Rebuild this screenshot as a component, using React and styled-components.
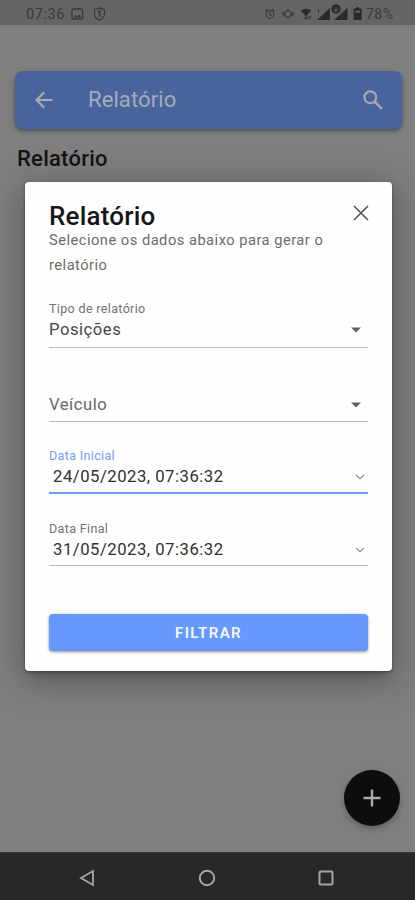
import * as React from 'react';
import styled, { createGlobalStyle } from 'styled-components';

const GlobalStyle = createGlobalStyle`
    * {
        box-sizing: border-box;
    }

    body {
        margin: 0;
        font-family: Roboto, "Liberation Sans", sans-serif;
    }
`;

const StatusIcons = () => (
    <StatusSvg width="100" height="20" viewBox="0 0 100 20">
        {/* alarm */}
        <g fill="none" stroke="#393939" strokeWidth="1.2">
            <circle cx="6" cy="10.5" r="3.8" />
            <path d="M1.3 7.2L3.8 5M10.7 7.2L8.2 5M6 8v2.7l1.8 1" />
        </g>
        {/* vibrate */}
        <path d="M24 6l4.2 4-4.2 4-4.2-4z" fill="none" stroke="#393939" strokeWidth="1.4" />
        <path d="M19.8 7.2L17.7 10l2.1 2.8M28.2 7.2l2.1 2.8-2.1 2.8" fill="none" stroke="#393939" />
        {/* wifi */}
        <path d="M36.7 6.3q5.3-3 10.6 0L42 12.6z" fill="#2b2b2b" />
        <path d="M41 14.8l1-2 1 2zM44 12l3 3M47 12l-3 3" fill="#2b2b2b" stroke="#2b2b2b" />
        {/* signal of both sims */}
        <path d="M66 3.8V16H53z" fill="#2b2b2b" />
        <path d="M53.5 6l1.2-.9V9" fill="none" stroke="#393939" />
        <path d="M83.5 3.8V16H70z" fill="#2b2b2b" />
        <circle cx="72" cy="5" r="5.5" fill="#656565" />
        <circle cx="72" cy="5" r="4.7" fill="#2b2b2b" />
        <path d="M72 2.7v4.7M70 5.4l2 2 2-2" fill="none" stroke="#686868" />
        {/* battery */}
        <path d="M89.6 4.5h2.5V3.3h3v1.2h2.6V16h-8.1z" fill="#2b2b2b" />
        <path d="M91.4 6.7h4.6v1.9h-4.6z" fill="#666" />
    </StatusSvg>
);

const SelectField = (props) => {
    return (
        <Field $top={props.top}>
            <Label>{props.label}</Label>
            <FieldRow $drop={props.muted ? 2.5 : 1}>
                <Value $muted={props.muted}>{props.value}</Value>
                <svg width="12" height="6" viewBox="0 0 12 6">
                    <path d="M1 .5h10L6 5.5z" fill="#606060" />
                </svg>
            </FieldRow>
        </Field>
    )
}

const DateField = (props) => {
    return (
        <Field $active={props.active} $top={props.top}>
            <Label $active={props.active} $drop={2}>{props.label}</Label>
            <FieldRow $date $drop={2.5}>
                <Value $date>{props.value}</Value>
                <svg width="10" height="6" viewBox="0 0 10 6">
                    <path d="M1 1l4 3.7L9 1" fill="none" stroke="#8c8c8c" strokeWidth="1.1" />
                </svg>
            </FieldRow>
        </Field>
    )
}

const App = () => {
    return (
        <Screen>
            <GlobalStyle />
            <StatusBar>
                <Clock>07:36</Clock>
                <svg width="36" height="14" viewBox="0 0 36 14">
                    <rect x="1" y="2" width="10.5" height="10" rx="1.2" fill="none" stroke="#393939" strokeWidth="1.4" />
                    <path d="M2.7 10.5l2-2.5 1.7 1.5 1.8-2.3 2 3.3z" fill="#393939" />
                    <path d="M28.5.9l5 1.8v4.2q0 4-5 6.2-5-2.2-5-6.2V2.7z" fill="none" stroke="#393939" strokeWidth="1.2" />
                    <path d="M27 5l1.7-1v5.5" fill="none" stroke="#393939" strokeWidth="1.5" />
                </svg>
                <StatusIcons />
                <Battery>78%</Battery>
            </StatusBar>

            <Page>
                <Toolbar>
                    <svg width="18" height="18" viewBox="0 0 18 18">
                        <path d="M17.5 9H2M9.3 1.2L1.5 9l7.8 7.8" fill="none" stroke="#a9adb5" strokeWidth="2.1" />
                    </svg>
                    <ToolbarTitle>Relatório</ToolbarTitle>
                    <svg width="20" height="20" viewBox="0 0 20 20">
                        <circle cx="7.3" cy="7.3" r="5.9" fill="none" stroke="#a2a8b3" strokeWidth="2.2" />
                        <path d="M11.5 11.5l7.4 7.4" stroke="#a2a8b3" strokeWidth="2.5" />
                    </svg>
                </Toolbar>
                <PageTitle>Relatório</PageTitle>
                <AddButton aria-label="Adicionar">
                    <svg width="18" height="18" viewBox="0 0 18 18">
                        <path d="M9 .5v17M.5 9h17" stroke="#aaa" strokeWidth="2.4" />
                    </svg>
                </AddButton>
            </Page>

            <Navigation>
                <svg width="16" height="18" viewBox="0 0 16 18">
                    <path d="M14 2v14L2 9z" fill="none" stroke="#a6a6a6" strokeWidth="1.8" />
                </svg>
                <svg width="18" height="18" viewBox="0 0 18 18">
                    <circle cx="9" cy="9" r="7.2" fill="none" stroke="#a6a6a6" strokeWidth="2" />
                </svg>
                <svg width="16" height="16" viewBox="0 0 16 16">
                    <rect x="1.5" y="1.5" width="13" height="13" rx="1" fill="none" stroke="#a6a6a6" strokeWidth="2" />
                </svg>
            </Navigation>

            <Modal>
                <ModalHeader>
                    <ModalTitle>Relatório</ModalTitle>
                    <svg width="16" height="16" viewBox="0 0 16 16">
                        <path d="M1 1l14 14M15 1L1 15" stroke="#555" strokeWidth="1.6" />
                    </svg>
                </ModalHeader>
                <Description>Selecione os dados abaixo para gerar o relatório</Description>
                <SelectField top={24} label="Tipo de relatório" value="Posições" />
                <SelectField top={26.5} value="Veículo" muted />
                <DateField top={24.5} label="Data Inicial" value="24/05/2023, 07:36:32" active />
                <DateField top={25} label="Data Final" value="31/05/2023, 07:36:32" />
                <FilterButton>FILTRAR</FilterButton>
            </Modal>
        </Screen>
    )
}

const Screen = styled.div`
    position: relative;
    display: flex;
    flex-direction: column;
    width: 415px;
    height: 900px;
    overflow: hidden;
    background: #7f7f7f;
`;

const StatusBar = styled.div`
    display: flex;
    align-items: center;
    height: 25px;
    padding: 3px 20px 0 26px;
    background: #656565;
    color: #393939;
`;

const Clock = styled.span`
    width: 45px;
    font-size: 14.5px;
    letter-spacing: 0.6px;
`;

const StatusSvg = styled.svg`
    margin-left: auto;
`;

const Battery = styled.span`
    width: 29px;
    margin-left: 2px;
    font-size: 14px;
    letter-spacing: 0.5px;
`;

const Page = styled.div`
    flex: 1;
    display: flex;
    flex-direction: column;
    padding: 46px 13px 26px 15px;
`;

const Toolbar = styled.div`
    display: flex;
    align-items: center;
    height: 57.5px;
    padding: 0 19px 0 20px;
    border-radius: 8px;
    background: #48639d;
    box-shadow: 0 2px 4px rgba(0, 0, 0, 0.4);
`;

const ToolbarTitle = styled.div`
    flex: 1;
    padding-left: 35px;
    color: #a5acb9;
    font-size: 22px;
    letter-spacing: 0.1px;
`;

const PageTitle = styled.div`
    margin: 17px 0 0 2px;
    color: #141414;
    font-size: 22px;
    font-weight: 500;
    line-height: 26px;
    letter-spacing: 0.25px;
`;

const AddButton = styled.button`
    display: flex;
    align-items: center;
    justify-content: center;
    align-self: flex-end;
    width: 56px;
    height: 56px;
    margin: auto 2px 0 0;
    padding: 0;
    border: none;
    border-radius: 50%;
    background: #0d0d0d;
    box-shadow: 0 3px 7px rgba(0, 0, 0, 0.25);
`;

const Navigation = styled.div`
    display: flex;
    align-items: center;
    justify-content: space-between;
    height: 48px;
    padding: 2px 81px 0 79px;
    border-top: 1px solid #383838;
    background: #282828;
`;

const Modal = styled.div`
    position: absolute;
    top: 182px;
    left: 24.5px;
    display: flex;
    flex-direction: column;
    width: 367.5px;
    height: 489px;
    padding: 19px 24px 0 24.5px;
    border-radius: 4px;
    background: #fefefe;
    box-shadow: 0 9px 12px -5px rgba(0, 0, 0, 0.2), 0 7px 35px 5px rgba(0, 0, 0, 0.24), 0 1px 3px rgba(0, 0, 0, 0.4);
`;

const ModalHeader = styled.div`
    display: flex;
    align-items: center;
    justify-content: space-between;
    height: 27px;
    padding-bottom: 1px;

    svg {
        margin: -2px -1px 0 0;
    }
`;

const ModalTitle = styled.div`
    padding-top: 4px;
    color: #161616;
    font-size: 26px;
    font-weight: 500;
    line-height: 28px;
    letter-spacing: 0.2px;
`;

const Description = styled.div`
    width: 300px;
    color: #6c6c6c;
    font-size: 14.7px;
    line-height: 24.5px;
    letter-spacing: 0.48px;
`;

const Field = styled.div`
    height: ${props => props.$active ? 48 : 47}px;
    margin-top: ${props => props.$top}px;
    border-bottom: ${props => props.$active ? '2px solid #6f9ef7' : '1px solid #bcbcbc'};
`;

const Label = styled.div`
    height: 16px;
    padding-top: ${props => props.$drop || 0}px;
    color: ${props => props.$active ? '#739df5' : '#727272'};
    font-size: 12.5px;
    line-height: 16px;
    letter-spacing: 0.35px;
`;

const FieldRow = styled.div`
    display: flex;
    align-items: center;
    justify-content: space-between;
    height: 27px;
    margin-top: ${props => props.$drop - 1.5}px;
    padding: ${props => props.$date ? '0 3px 0 4px' : '0 6px 0 0'};
`;

const Value = styled.div`
    color: ${props => props.$muted ? '#686868' : props.$date ? '#303030' : '#484848'};
    font-size: 16.7px;
    line-height: 24px;
    letter-spacing: 0.5px;
`;

const FilterButton = styled.button`
    height: 37px;
    margin-top: 48px;
    padding: 0;
    border: none;
    border-radius: 4px;
    background: #6699ff;
    box-shadow: 0 1px 3px rgba(0, 0, 0, 0.45);
    color: #f6f9ff;
    font-family: inherit;
    font-size: 15px;
    font-weight: 600;
    letter-spacing: 1.4px;
`;

export default App;
